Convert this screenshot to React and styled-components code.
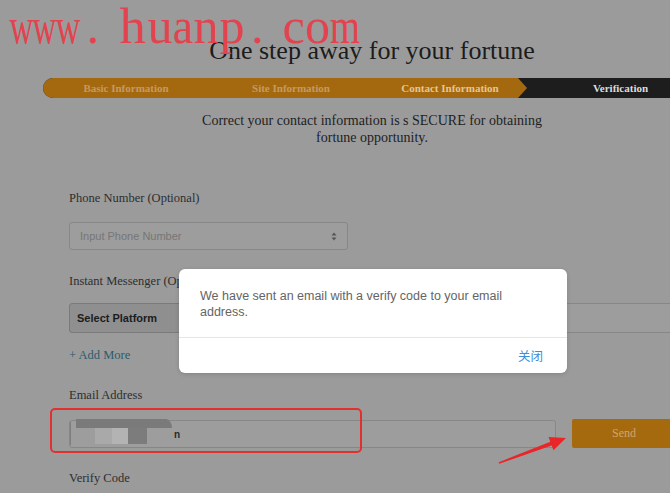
import React from "react";
import styled, { createGlobalStyle } from "styled-components";

const GlobalStyle = createGlobalStyle`
  html, body {
    margin: 0;
    padding: 0;
    background: #9b9b9b;
    overflow: hidden;
  }
  body {
    font-family: "Liberation Serif", "Times New Roman", serif;
  }
`;

const Page = styled.div`
  position: relative;
  width: 670px;
  height: 493px;
  overflow: hidden;
  background: #9b9b9b;
`;

const Container = styled.div`
  width: 658px;
  margin-left: 43px;
  padding-top: 36px;
  display: flex;
  flex-direction: column;
`;

const Title = styled.h1`
  margin: 0;
  font-size: 26px;
  line-height: 30px;
  font-weight: normal;
  color: #1c1c1c;
  text-align: center;
`;

const StepBar = styled.div`
  margin-top: 12px;
  width: 680px;
  height: 20px;
  display: flex;
  background: #1d1d1d;
  border-radius: 10px 0 0 10px;
  overflow: hidden;
`;

const Step = styled.div`
  flex: ${(p) => (p.$w ? `0 0 ${p.$w}px` : "1")};
  display: flex;
  align-items: center;
  justify-content: center;
  font-size: 11px;
  font-weight: bold;
  color: ${(p) => (p.$active ? "#e4c591" : p.$dark ? "#dcdcdc" : "#c49a62")};
  background: ${(p) => (p.$dark ? "transparent" : "#a4690f")};
  clip-path: ${(p) =>
    p.$arrow
      ? "polygon(0 0, calc(100% - 9px) 0, 100% 50%, calc(100% - 9px) 100%, 0 100%)"
      : "none"};
  margin-left: ${(p) => (p.$dark ? "-9px" : "0")};
  white-space: nowrap;
`;

const Subtitle = styled.p`
  margin: 14px 0 0;
  font-size: 14px;
  line-height: 17px;
  color: #1e1e1e;
  text-align: center;
  padding: 0 150px;
`;

const Form = styled.div`
  padding-left: 26px;
  display: flex;
  flex-direction: column;
`;

const Label = styled.div`
  margin-top: ${(p) => p.$mt}px;
  font-size: 12.5px;
  line-height: 16px;
  color: #2e2e2e;
`;

const Row = styled.div`
  position: relative;
  margin-top: ${(p) => p.$mt}px;
  display: flex;
  align-items: center;
  gap: ${(p) => p.$gap || 0}px;
`;

const Input = styled.div`
  box-sizing: border-box;
  width: ${(p) => p.$w}px;
  height: ${(p) => p.$h || 28}px;
  border: 1px solid #878787;
  border-radius: 3px;
  background: #9d9d9d;
  display: flex;
  align-items: ${(p) => (p.$top ? "flex-start" : "center")};
  padding: 0 ${(p) => (p.$pad === undefined ? 10 : p.$pad)}px;
  font-family: "Liberation Sans", Arial, sans-serif;
  font-size: 11px;
  color: #767676;
  flex-shrink: 0;
`;

const Placeholder = styled.span`
  flex: 1;
`;

const Select = styled(Input)`
  background: #8f8f8f;
  border-color: #7a7a7a;
  color: #1c1c1c;
  font-weight: bold;
  padding: 0 7px;
`;

const AddMore = styled.div`
  margin-top: 14px;
  font-size: 12.5px;
  line-height: 16px;
  color: #2a5b6c;
`;

const Caret = styled.span`
  display: block;
  width: 1px;
  height: 23px;
  margin-top: 1px;
  background: #7e7e7e;
  flex-shrink: 0;
`;

const Stack = styled.div`
  display: flex;
  flex-direction: column;
  margin-left: 5px;
  margin-top: -2px;
`;

const BlockRow = styled.div`
  display: flex;
  margin-left: 19px;
`;

const Block = styled.span`
  display: block;
  width: ${(p) => p.$w}px;
  height: ${(p) => p.$h}px;
  background: ${(p) => p.$c};
  border-top-right-radius: ${(p) => (p.$slant ? "6px 9px" : "0")};
`;

const Letter = styled.span`
  font-family: "Liberation Sans", Arial, sans-serif;
  font-size: 10px;
  line-height: 12px;
  font-weight: bold;
  color: #2a2a2a;
  margin-left: 2px;
  margin-top: 8px;
`;

const SendButton = styled.button`
  width: 104px;
  height: 29px;
  border: none;
  border-radius: 2px;
  background: #a56a0e;
  color: #cfa56c;
  font-family: "Liberation Serif", "Times New Roman", serif;
  font-size: 12px;
  flex-shrink: 0;
`;

const Annotation = styled.div`
  position: absolute;
  left: -19px;
  top: -11px;
  width: 312px;
  height: 45px;
  box-sizing: border-box;
  border: 2px solid #e2302f;
  border-radius: 5px;
`;

const Arrow = styled.svg`
  position: absolute;
  left: 490px;
  top: 425px;
`;

const Watermark = styled.div`
  position: absolute;
  left: 10px;
  top: -1px;
  display: flex;
  font-family: "Liberation Serif", "Times New Roman", serif;
  font-size: 50px;
  line-height: 55px;
  color: #e2434f;
`;

const Glyph = styled.span`
  display: flex;
  justify-content: center;
  width: ${(p) => p.$w}px;
  transform: scaleX(${(p) => p.$sx || 1});
  white-space: pre;
`;

const Modal = styled.div`
  position: absolute;
  left: 179px;
  top: 269px;
  width: 388px;
  height: 104px;
  background: #fff;
  border-radius: 6px;
  box-shadow: 0 1px 4px rgba(0, 0, 0, 0.15);
  display: flex;
  flex-direction: column;
  font-family: "Liberation Sans", Arial, "Noto Sans CJK SC", sans-serif;
`;

const ModalBody = styled.div`
  height: 69px;
  box-sizing: border-box;
  padding: 19px 50px 0 21px;
  font-size: 12.5px;
  line-height: 16px;
  color: #646464;
  border-bottom: 1px solid #e6e6e6;
`;

const ModalFooter = styled.div`
  flex: 1;
  display: flex;
  align-items: center;
  justify-content: flex-end;
  padding-right: 24px;
`;

const CloseLink = styled.span`
  font-family: "Noto Sans CJK SC", sans-serif;
  font-size: 12.5px;
  color: #3c8ddb;
`;

const Spinner = () => (
  <svg width="6" height="9" viewBox="0 0 6 9">
    <path d="M3 0.5 L5.5 3.5 H0.5 Z" fill="#555" />
    <path d="M3 8.5 L5.5 5.5 H0.5 Z" fill="#555" />
  </svg>
);

const watermark = [
  ["w", 23, 0.66],
  ["w", 23, 0.66],
  ["w", 24, 0.68],
  [". ", 38],
  ["h", 29, 1.05],
  ["u", 26],
  ["a", 20, 0.92],
  ["n", 26],
  ["p", 26],
  [". ", 37],
  ["c", 23],
  ["o", 25],
  ["m", 30, 0.78],
];

export default function App() {
  return (
    <Page>
      <GlobalStyle />
      <Container>
        <Title>One step away for your fortune</Title>
        <StepBar>
          <Step $w={166}>Basic Information</Step>
          <Step $w={164}>Site Information</Step>
          <Step $w={154} $arrow $active>
            Contact Information
          </Step>
          <Step $dark>Verification</Step>
        </StepBar>
        <Subtitle>
          Correct your contact information is s SECURE for obtaining fortune opportunity.
        </Subtitle>
        <Form>
          <Label $mt={44}>Phone Number (Optional)</Label>
          <Row $mt={16}>
            <Input $w={279}>
              <Placeholder>Input Phone Number</Placeholder>
              <Spinner />
            </Input>
          </Row>
          <Label $mt={23}>Instant Messenger (Optional)</Label>
          <Row $mt={14} $gap={12}>
            <Select $w={180} $h={30}>Select Platform</Select>
            <Input $w={460} $h={30} />
          </Row>
          <AddMore>+ Add More</AddMore>
          <Label $mt={24}>Email Address</Label>
          <Row $mt={16} $gap={16}>
            <Input $w={487} $pad={0} $top>
              <Caret />
              <Stack>
                <Block $w={96} $h={9} $c="#7a7a7a" $slant />
                <BlockRow>
                  <Block $w={17} $h={16} $c="#a9a9a9" />
                  <Block $w={16} $h={16} $c="#b3b3b3" />
                  <Block $w={19} $h={16} $c="#7c7c7c" />
                </BlockRow>
              </Stack>
              <Letter>n</Letter>
            </Input>
            <SendButton>Send</SendButton>
            <Annotation />
          </Row>
          <Label $mt={22}>Verify Code</Label>
        </Form>
      </Container>

      <Arrow width="80" height="45" viewBox="0 0 80 45">
        <path
          d="M8.7 37.25 L60.3 16.7 L58.5 12 L76 13 L63.5 25.2 L61.7 20.5 L9.3 38.75 Z"
          fill="#e8262a"
        />
      </Arrow>

      <Modal>
        <ModalBody>
          We have sent an email with a verify code to your email address.
        </ModalBody>
        <ModalFooter>
          <CloseLink>关闭</CloseLink>
        </ModalFooter>
      </Modal>

      <Watermark>
        {watermark.map(([ch, w, sx], i) => (
          <Glyph key={i} $w={w} $sx={sx}>
            {ch}
          </Glyph>
        ))}
      </Watermark>
    </Page>
  );
}
